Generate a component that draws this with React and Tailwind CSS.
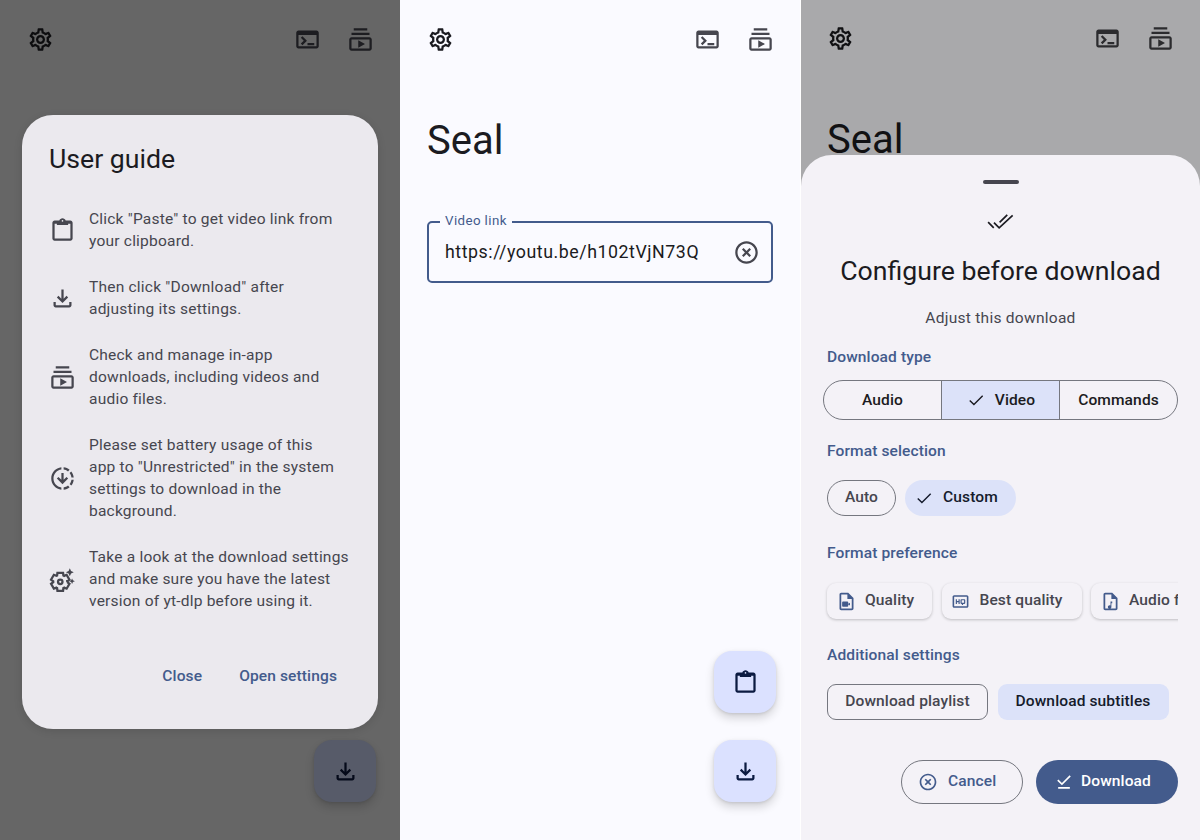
import React from "react";

const P = {
  gear: "M19.43 12.98c.04-.32.07-.64.07-.98 0-.34-.03-.66-.07-.98l2.11-1.65c.19-.15.24-.42.12-.64l-2-3.46c-.09-.16-.26-.25-.44-.25-.06 0-.12.01-.17.03l-2.49 1c-.52-.4-1.08-.73-1.69-.98l-.38-2.65C14.46 2.18 14.25 2 14 2h-4c-.25 0-.46.18-.49.42l-.38 2.65c-.61.25-1.17.59-1.69.98l-2.49-1c-.06-.02-.12-.03-.18-.03-.17 0-.34.09-.43.25l-2 3.46c-.13.22-.07.49.12.64l2.11 1.65c-.04.32-.07.65-.07.98 0 .33.03.66.07.98l-2.11 1.65c-.19.15-.24.42-.12.64l2 3.46c.09.16.26.25.44.25.06 0 .12-.01.17-.03l2.49-1c.52.4 1.08.73 1.69.98l.38 2.65c.03.24.24.42.49.42h4c.25 0 .46-.18.49-.42l.38-2.65c.61-.25 1.17-.59 1.69-.98l2.49 1c.06.02.12.03.18.03.17 0 .34-.09.43-.25l2-3.46c.12-.22.07-.49-.12-.64l-2.11-1.65zm-1.98-1.71c.04.31.05.52.05.73 0 .21-.02.43-.05.73l-.14 1.13.89.7 1.08.84-.7 1.21-1.27-.51-1.04-.42-.9.68c-.43.32-.84.56-1.25.73l-1.06.43-.16 1.13-.2 1.35h-1.4l-.19-1.35-.16-1.13-1.06-.43c-.43-.18-.83-.41-1.23-.71l-.91-.7-1.06.43-1.27.51-.7-1.21 1.08-.84.89-.7-.14-1.13c-.03-.31-.05-.54-.05-.74s.02-.43.05-.73l.14-1.13-.89-.7-1.08-.84.7-1.21 1.27.51 1.04.42.9-.68c.43-.32.84-.56 1.25-.73l1.06-.43.16-1.13.2-1.35h1.39l.19 1.35.16 1.13 1.06.43c.43.18.83.41 1.23.71l.91.7 1.06-.43 1.27-.51.7 1.21-1.07.85-.89.7.14 1.13zM12 8c-2.21 0-4 1.79-4 4s1.79 4 4 4 4-1.79 4-4-1.79-4-4-4zm0 6c-1.1 0-2-.9-2-2s.9-2 2-2 2 .9 2 2-.9 2-2 2z",
  terminal: "M20 4H4c-1.11 0-2 .9-2 2v12c0 1.1.89 2 2 2h16c1.1 0 2-.9 2-2V6c0-1.1-.89-2-2-2zm0 14H4V8h16v10zm-2-1h-6v-2h6v2zM7.5 17l-1.41-1.41L8.67 13l-2.59-2.59L7.5 9l4 4-4 4z",
  subs: "M4 6h16v2H4zm2-4h12v2H6zm14 8H4c-1.1 0-2 .9-2 2v8c0 1.1.9 2 2 2h16c1.1 0 2-.9 2-2v-8c0-1.1-.9-2-2-2zm0 10H4v-8h16v8zm-10-7.27v6.53L16 16z",
  clip: "M19 3h-4.18C14.4 1.84 13.3 1 12 1S9.6 1.84 9.18 3H5c-1.1 0-2 .9-2 2v14c0 1.1.9 2 2 2h14c1.1 0 2-.9 2-2V5c0-1.1-.9-2-2-2zm-7-.25c.41 0 .75.34.75.75s-.34.75-.75.75-.75-.34-.75-.75.34-.75.75-.75zM19 19H5V6h2v1h10V6h2v13z",
  download: "M18 15v3H6v-3H4v3c0 1.1.9 2 2 2h12c1.1 0 2-.9 2-2v-3h-2zm-1-4l-1.41-1.41L13 12.17V4h-2v8.17L8.41 9.59 7 11l5 5 5-5z",
  downloading: "M18.32 4.26C16.84 3.05 15.01 2.25 13 2.05v2.02c1.46.18 2.79.76 3.9 1.62L18.32 4.26zM19.93 11h2.02c-.2-2.01-1-3.84-2.21-5.32L18.31 7.1C19.17 8.21 19.75 9.54 19.93 11zM18.31 16.9l1.43 1.43c1.21-1.48 2.01-3.32 2.21-5.32h-2.02C19.75 14.46 19.17 15.79 18.31 16.9zM13 19.93v2.02c2.01-.2 3.84-1 5.32-2.21l-1.43-1.43C15.79 19.17 14.46 19.75 13 19.93zM15.59 10.59L13 13.17V7h-2v6.17l-2.59-2.59L7 12l5 5 5-5-1.41-1.41zM11 19.93v2.02c-5.05-.5-9-4.76-9-9.95s3.95-9.45 9-9.95v2.02C7.05 4.56 4 7.92 4 12s3.05 7.44 7 7.93z",
  suggest: "M17.41 6.59L15 5.5l2.41-1.09L18.5 2l1.09 2.41L22 5.5l-2.41 1.09L18.5 9l-1.09-2.41zM21.28 12.72L20.5 11l-.78 1.72L18 13.5l1.72.78.78 1.72.78-1.72L23 13.5l-1.72-.78z",
  gearOutline: "M16.24 14.37l1.94 1.47-2.5 4.33-2.24-.94c-.2.13-.42.26-.64.37L12.5 22h-5l-.3-2.41c-.22-.11-.43-.23-.64-.37l-2.24.94-2.5-4.33 1.94-1.47c-.01-.12-.01-.25-.01-.37s0-.25.01-.37l-1.94-1.47 2.5-4.33 2.24.94c.2-.13.42-.26.64-.37L7.5 6h5l.3 2.41c.22.11.43.23.64.37l2.24-.94 2.5 4.33-1.94 1.47c.01.12.01.24.01.37s0 .25-.01.37z",
  cancel: "M14.59 8L12 10.59 9.41 8 8 9.41 10.59 12 8 14.59 9.41 16 12 13.41 14.59 16 16 14.59 13.41 12 16 9.41 14.59 8zM12 2C6.47 2 2 6.47 2 12s4.47 10 10 10 10-4.47 10-10S17.53 2 12 2zm0 18c-4.41 0-8-3.59-8-8s3.59-8 8-8 8 3.59 8 8-3.59 8-8 8z",
  done: "M20.13 5.41L18.72 4l-9.19 9.19-4.25-4.24-1.41 1.41 5.66 5.66zM5 18h14v2H5z",
  videoFile: "M14 2H6c-1.1 0-2 .9-2 2v16c0 1.1.9 2 2 2h12c1.1 0 2-.9 2-2V8l-6-6zm4 18H6V4h7v5h5v11zm-2-6.5l-2 1.2V13c0-.55-.45-1-1-1H8c-.55 0-1 .45-1 1v4c0 .55.45 1 1 1h5c.55 0 1-.45 1-1v-1.7l2 1.2v-4z",
  audioFile: "M14 2H6c-1.1 0-2 .9-2 2v16c0 1.1.9 2 2 2h12c1.1 0 2-.9 2-2V8l-6-6zm4 18H6V4h7v5h5v11zm-4-8h-2v4.54c-.3-.17-.64-.29-1-.29-1.1 0-2 .9-2 2s.9 2 2 2 2-.9 2-2V14h1v-2z",
  hq: "M20 4H4c-1.1 0-2 .9-2 2v12c0 1.1.9 2 2 2h16c1.1 0 2-.9 2-2V6c0-1.1-.9-2-2-2zm0 14H4V6h16v12zM6 15h1.5v-2h2v2H11V9H9.5v2.5h-2V9H6v6zm7 0h.75v1.5h1.5V15H17c.55 0 1-.45 1-1v-4c0-.55-.45-1-1-1h-4c-.55 0-1 .45-1 1v4c0 .55.45 1 1 1zm.5-4.5h3v3h-3v-3z",
};

function Icon({ d, size = 27, className = "" }) {
  return (
    <svg width={size} height={size} viewBox="0 0 24 24" fill="currentColor" className={"shrink-0 " + className}>
      <path d={d} />
    </svg>
  );
}

function Check({ size = 20 }) {
  return (
    <svg width={size} height={size} viewBox="0 0 24 24" fill="none" stroke="currentColor" strokeWidth="1.7" className="shrink-0">
      <path d="M4.5 12.5l5 5L20 7" />
    </svg>
  );
}

function DoneAll() {
  return (
    <svg width="27" height="27" viewBox="0 0 24 24" fill="none" stroke="#1b1b21" strokeWidth="1.5" className="shrink-0">
      <path d="M1 12.6l5 5M6.2 13l4.6 4.6L22.8 6.6M11.2 12.8L18 6.2" />
    </svg>
  );
}

function SuggestIcon() {
  return (
    <svg width="27" height="27" viewBox="0 0 24 24" className="shrink-0 text-[#46464f]">
      <path d={P.suggest} fill="currentColor" />
      <path d={P.gearOutline} fill="none" stroke="currentColor" strokeWidth="2" />
      <circle cx="10" cy="14" r="2" fill="none" stroke="currentColor" strokeWidth="2" />
    </svg>
  );
}

function TopBar({ tone = "text-[#1b1b21]", tone2 = "text-[#46464f]", shift = "pt-[26px]" }) {
  return (
    <div className={"flex items-center " + shift + " pl-[27px] pr-[26.5px]"}>
      <Icon d={P.gear} className={tone} />
      <div className="flex-1" />
      <Icon d={P.terminal} className={tone2} />
      <Icon d={P.subs} className={tone2 + " ml-[26px]"} />
    </div>
  );
}

function Fab({ d, bg = "bg-[#dbe1ff]", color = "text-[#0b1a41]" }) {
  return (
    <div className={"flex h-[62px] w-[62px] items-center justify-center rounded-[18px] shadow-[0_5px_10px_rgba(0,0,0,0.16),0_1px_3px_rgba(0,0,0,0.1)] " + bg + " " + color}>
      <Icon d={d} />
    </div>
  );
}

function GuideRow({ icon, children }) {
  return (
    <div className="flex items-center gap-[13px]">
      <div className="flex w-[27px] shrink-0 justify-center">{icon}</div>
      <p className="w-[268px] text-[15.55px] leading-[22px] tracking-[0.2px] text-[#46464f]">{children}</p>
    </div>
  );
}

function Label({ children, mt }) {
  return <div className={"pl-[4px] text-[15.55px] font-[475] leading-[22px] tracking-[0.11px] text-[#435b8c] " + mt}>{children}</div>;
}

function PanelOne() {
  return (
    <div className="relative h-[840px] w-[400px] shrink-0 bg-[#666666]">
      <TopBar tone="text-[#0d0d0f]" tone2="text-[#1d1d21]" />
      <div className="absolute left-[22px] top-[115px] flex h-[614px] w-[356px] flex-col rounded-[31px] bg-[#ebe9ee] pl-[27px] shadow-[0_2px_8px_rgba(0,0,0,0.12)]">
        <h2 className="mt-[26px] text-[26.67px] leading-[36px] text-[#1b1b21]">User guide</h2>
        <div className="mt-[31px] flex flex-col gap-[24px]">
          <GuideRow icon={<Icon d={P.clip} className="text-[#46464f]" />}>Click "Paste" to get video link from<br />your clipboard.</GuideRow>
          <GuideRow icon={<Icon d={P.download} className="text-[#46464f]" />}>Then click "Download" after<br />adjusting its settings.</GuideRow>
          <GuideRow icon={<Icon d={P.subs} className="text-[#46464f]" />}>Check and manage in-app<br />downloads, including videos and<br />audio files.</GuideRow>
          <GuideRow icon={<Icon d={P.downloading} className="text-[#46464f]" />}>Please set battery usage of this<br />app to "Unrestricted" in the system<br />settings to download in the<br />background.</GuideRow>
          <GuideRow icon={<SuggestIcon />}>Take a look at the download settings<br />and make sure you have the latest<br />version of yt-dlp before using it.</GuideRow>
        </div>
        <div className="mt-auto mb-[42px] flex justify-end gap-[37px] pr-[41px] text-[15.55px] font-[475] leading-[22px] tracking-[0.11px] text-[#435b8c]">
          <span>Close</span>
          <span>Open settings</span>
        </div>
      </div>
      <div className="absolute left-[314px] top-[740px]">
        <Fab d={P.download} bg="bg-[#575b69]" color="text-[#050a1a]" />
      </div>
    </div>
  );
}

function PanelTwo() {
  return (
    <div className="relative flex h-[840px] w-[400px] shrink-0 flex-col bg-[#fafaff]">
      <TopBar />
      <h1 className="mt-[63px] pl-[27px] text-[40px] leading-[50px] text-[#1b1b21]">Seal</h1>
      <div className="relative mx-[27px] mt-[55px] flex h-[62px] items-center rounded-[5px] border-2 border-[#435b8c] pl-[16px] pr-[11px]">
        <span className="absolute -top-[10px] left-[11px] bg-[#fafaff] px-[5px] text-[13.33px] leading-[16px] tracking-[0.4px] text-[#435b8c]">Video link</span>
        <span className="flex-1 text-[17.78px] tracking-[0.55px] text-[#1b1b21]">https://youtu.be/h102tVjN73Q</span>
        <Icon d={P.cancel} className="text-[#46464f]" />
      </div>
      <div className="mt-auto mb-[38px] mr-[24px] flex flex-col items-end gap-[27px]">
        <Fab d={P.clip} />
        <Fab d={P.download} />
      </div>
    </div>
  );
}

function Chip({ children, selected, rounded = "rounded-[18px]", className = "" }) {
  return (
    <div className={"flex h-[35.5px] shrink-0 items-center text-[15.55px] font-[475] tracking-[0.11px] " + rounded + " " + (selected ? "bg-[#dce2f9] text-[#151b2c]" : "border border-[#75777f] text-[#46464f]") + " " + className}>
      {children}
    </div>
  );
}

function PrefChip({ d, children, className, iconSize = 21, iconClass = "" }) {
  return (
    <div className={"flex h-[35.5px] shrink-0 items-center gap-[8px] rounded-[9px] bg-[#f4f2f7] pl-[9px] text-[15.55px] font-[475] tracking-[0.11px] text-[#46464f] shadow-[0_1px_3px_rgba(0,0,0,0.22)] " + className}>
      <Icon d={d} size={iconSize} className={"text-[#435b8c] " + iconClass} />
      <span className="whitespace-nowrap">{children}</span>
    </div>
  );
}

function Segment({ children, className = "" }) {
  return <div className={"flex h-full items-center justify-center gap-[9px] text-[15.55px] font-[475] tracking-[0.11px] text-[#1b1b21] " + className}>{children}</div>;
}

function PanelThree() {
  return (
    <div className="ml-[1px] relative h-[840px] w-[399px] shrink-0 bg-[#a9a9ab]">
      <div className="-ml-[1px]">
        <TopBar tone="text-[#101012]" tone2="text-[#2b2b2e]" shift="pt-[25px]" />
        <h1 className="mt-[63px] pl-[27px] text-[40px] leading-[50px] text-[#111113]">Seal</h1>
      </div>
      <div className="absolute left-0 top-[155px] flex h-[685px] w-[399px] flex-col rounded-t-[31px] bg-[#f4f2f7] pl-[22px] pr-[22px] text-[#1b1b21]">
        <div className="mx-auto mt-[25px] h-[4.4px] w-[36px] shrink-0 rounded-full bg-[#46464f]" />
        <div className="mt-[24px] flex justify-center"><DoneAll /></div>
        <div className="mt-[18px] text-center text-[26.67px] leading-[36px] text-[#1b1b21]">Configure before download</div>
        <div className="mt-[18px] text-center text-[15.55px] leading-[22px] tracking-[0.25px] text-[#46464f]">Adjust this download</div>
        <Label mt="mt-[17px]">Download type</Label>
        <div className="mt-[12px] flex h-[40px] overflow-hidden rounded-full border border-[#75777f]">
          <Segment className="w-[117px]">Audio</Segment>
          <Segment className="w-[119px] border-x border-[#75777f] bg-[#dce2f9]"><Check />Video</Segment>
          <Segment className="flex-1">Commands</Segment>
        </div>
        <Label mt="mt-[20px]">Format selection</Label>
        <div className="mt-[18px] flex gap-[9px] pl-[4px]">
          <Chip className="w-[69px] justify-center">Auto</Chip>
          <Chip selected className="w-[111px] gap-[9px] pl-[9px]"><Check />Custom</Chip>
        </div>
        <Label mt="mt-[26.5px]">Format preference</Label>
        <div className="mt-[16px] overflow-hidden pb-[5px] pl-[4px] pt-[3px]">
          <div className="flex gap-[9.5px]">
            <PrefChip d={P.videoFile} className="w-[105px]">Quality</PrefChip>
            <PrefChip d={P.hq} iconSize={19} iconClass="mr-[2px]" className="w-[140px]">Best quality</PrefChip>
            <PrefChip d={P.audioFile} className="w-[120px]">Audio format</PrefChip>
          </div>
        </div>
        <Label mt="mt-[20.5px]">Additional settings</Label>
        <div className="mt-[18px] flex gap-[9.5px] pl-[4px]">
          <Chip rounded="rounded-[9px]" className="w-[161px] justify-center">Download playlist</Chip>
          <Chip selected rounded="rounded-[9px]" className="w-[171px] justify-center">Download subtitles</Chip>
        </div>
        <div className="mt-[40px] flex justify-end gap-[13px]">
          <div className="flex h-[44.4px] w-[122px] items-center gap-[10px] rounded-full border border-[#75777f] pl-[16px] text-[15.55px] font-[475] tracking-[0.11px] text-[#435b8c]">
            <Icon d={P.cancel} size={20} />Cancel
          </div>
          <div className="flex h-[44.4px] w-[142px] items-center gap-[7px] rounded-full bg-[#435b8c] pl-[18px] text-[15.55px] font-[475] tracking-[0.11px] text-white">
            <Icon d={P.done} size={20} />Download
          </div>
        </div>
      </div>
    </div>
  );
}

export default function App() {
  return (
    <div className="flex h-[840px] w-[1200px] overflow-hidden bg-white [font-family:Roboto,sans-serif]">
      <PanelOne />
      <PanelTwo />
      <PanelThree />
    </div>
  );
}
